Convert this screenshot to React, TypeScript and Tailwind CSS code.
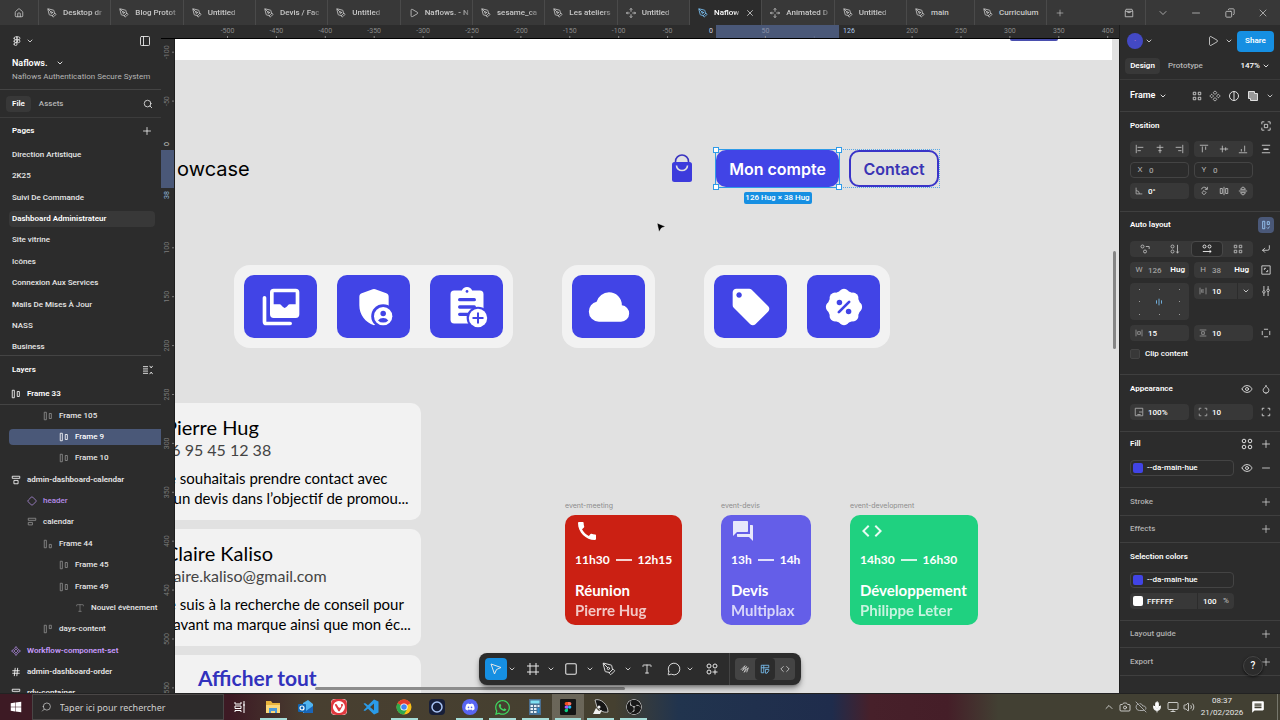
import type { ReactNode } from 'react';
import {
  ChevronDown, ChevronUp, Code, Component, Copy, CornerDownLeft, Diamond, Droplet, Eye, Figma, Hash, House, MessageCircle,
  Mic, Minus, Monitor, PanelLeft, PenTool, Play, Plus, Search, Square, Type, Volume2, X, CloudOff, Camera,
} from 'lucide-react';
import { MdCall, MdCode, MdForum, MdLocalOffer, MdMessage } from 'react-icons/md';
import { FaDiscord, FaWhatsapp, FaWindows } from 'react-icons/fa';
import { SiObsstudio, SiVivaldi } from 'react-icons/si';

/* ---------- small glyphs, drawn on a 12 x 12 grid ---------- */

function Glyph({ d, dots, className = 'size-3' }: { d?: string; dots?: [number, number, number][]; className?: string }) {
  return (
    <svg viewBox="0 0 12 12" className={`shrink-0 ${className}`} fill="none" stroke="currentColor" strokeWidth="1" aria-hidden="true">
      {d && <path d={d} />}
      {dots?.map(([x, y, r]) => <circle key={`${x}-${y}`} cx={x} cy={y} r={r} />)}
    </svg>
  );
}

const G = {
  frameRow: 'M1.500 1.500H4v9H1.500zM7.500 3H10v6H7.500z',
  frameRowEnd: 'M1.500 1.500H4v9H1.500zM7.500 6.500H10v4H7.500z',
  frameRowStart: 'M1.500 1.500H4v9H1.500zM7.500 1.500H10v4H7.500z',
  layoutAdd: 'M2 1.500h2.500v9H2zM7.500 2H10v3.500H7.500zM7 9l1.200 1.200L10.500 8',
  frameCol: 'M1.5 1.5h9v2.5h-9zM3.5 6.5h5v4h-5z',
  frameColLeft: 'M1.5 1.5h9v2.5h-9zM1.5 6.5h5v3h-5z',
  collapse: 'M0 2h6M0 4.700h6M0 7.300h6M0 10h6M8 1l1.800 2.500L11.600 1M8 11l1.800-2.500L11.600 11',
  alignL: 'M1.500 1v10M3 4h7M3 8h4',
  alignCH: 'M6 1v10M2 4h8M4 8h4',
  alignR: 'M10.500 1v10M9 4H2M9 8H5',
  alignT: 'M1 1.500h10M4 3v7M8 3v4',
  alignCV: 'M1 6h10M4 2v8M8 4v4',
  alignB: 'M1 10.500h10M4 9V6M8 9V2',
  distribute: 'M1 1.500h10M1 10.500h10M3 6h6M3 6.600h6',
  angle: 'M2.500 2v7.500H10M2.500 5.500a4 4 0 0 1 4 4',
  flipH: 'M6 1v10M4 3v6L1.500 9V3zM8 3v6l2.500 0V3z',
  flipV: 'M1 6h10M3 4h6L7 1.500H5zM3 8h6L7 10.500H5z',
  hgap: 'M1.500 1v10M10.500 1v10M6 3v6M4 3.500v5',
  vpad: 'M1 1.500h10M1 10.500h10M4 4h4v4H4z',
  hpad: 'M1.500 1v10M10.500 1v10M4 4h4v4H4z',
  corners: 'M1.500 4V1.500H4M8 1.500h2.500V4M10.500 8v2.500H8M4 10.500H1.500V8',
  sliders: 'M3.500 0v5M3.500 8.500V12M8.500 0v3.500M8.500 7v5M2 7a1.500 1.500 0 1 0 3 0a1.500 1.500 0 1 0-3 0M7 5.200a1.500 1.500 0 1 0 3 0a1.500 1.500 0 1 0-3 0',
  four: 'M1.500 1.500h3v3h-3zM7.500 1.500h3v3h-3zM1.500 7.500h3v3h-3zM7.500 7.500h3v3h-3z',
  target: 'M1 4V1h3M8 1h3v3M11 8v3H8M4 11H1V8M4 4h4v4H4z',
  fit: 'M1 1h10v10H1zM4 6V4h2M8 6v2H6',
  sides: 'M3.500 1.500h5M3.500 10.500h5M1.500 3.500v5M10.500 3.500v5',
  frame: 'M3 0v12M9 0v12M0 3h12M0 9h12',
  rotate: 'M6 5.500 8.500 8 6 10.500 3.500 8zM3 4a3.200 3.200 0 0 1 5.500-1.500L9.500 4M10 1v3H7',
};

function Chev() {
  return <ChevronDown className="size-2 shrink-0" strokeWidth={2.5} aria-hidden="true" />;
}

function FourDots({ last = false }: { last?: boolean }) {
  return (
    <Glyph
      className="size-3"
      dots={last ? [[3, 3, 2], [9, 3, 2], [3, 9, 2]] : [[3, 3, 1.8], [9, 3, 1.8], [3, 9, 1.8], [9, 9, 1.8]]}
      d={last ? 'M9 6.500v5M6.500 9h5' : undefined}
    />
  );
}

/* ---------- top tab strip ---------- */

type Tab = { title: string; kind: 'pen' | 'play' | 'make'; active?: boolean };
const TABS: Tab[] = [
  { title: 'Desktop dr', kind: 'pen' },
  { title: 'Blog Protot', kind: 'pen' },
  { title: 'Untitled', kind: 'pen' },
  { title: 'Devis / Fac', kind: 'pen' },
  { title: 'Untitled', kind: 'pen' },
  { title: 'Naflows. - N', kind: 'play' },
  { title: 'sesame_ca', kind: 'pen' },
  { title: 'Les ateliers', kind: 'pen' },
  { title: 'Untitled', kind: 'make' },
  { title: 'Naflow', kind: 'pen', active: true },
  { title: 'Animated D', kind: 'make' },
  { title: 'Untitled', kind: 'pen' },
];

function TabIcon({ kind }: { kind: Tab['kind'] }) {
  if (kind === 'play') return <Play className="size-2.5 shrink-0" strokeWidth={2} />;
  if (kind === 'make')
    return <Glyph className="size-2.5" d="M6 0.500v4M6 7.500v4M0.500 6h4M7.500 6h4M4.500 2 6 .5 7.500 2M4.500 10 6 11.500 7.500 10M2 4.500.5 6 2 7.500M10 4.500 11.500 6 10 7.500" />;
  return <PenTool className="size-2.5 shrink-0" strokeWidth={2} />;
}

function TabButton({ tab }: { tab: Tab }) {
  return (
    <button
      type="button"
      className={
        tab.active
          ? 'flex h-full min-w-0 items-center gap-1.5 border-r border-[#4a4a4a] bg-[#2c2c2c] pl-2 text-white'
          : 'flex h-full min-w-0 items-center gap-1.5 border-r border-[#4a4a4a] pl-2 text-[#c8c8c8]'
      }
    >
      <span className={tab.active ? 'text-[#7cc4f8]' : ''}><TabIcon kind={tab.kind} /></span>
      <span className="whitespace-nowrap [mask-image:linear-gradient(to_right,black_80%,#0006)]">{tab.title}</span>
      {tab.active && <X className="size-2.5 shrink-0" strokeWidth={1.5} />}
    </button>
  );
}

function TabStrip() {
  return (
    <header className="flex h-[25px] shrink-0 items-center bg-[#383838] font-medium text-[#c8c8c8]">
      <button type="button" aria-label="Home" className="flex h-full w-[39px] shrink-0 items-center justify-center border-r border-[#4a4a4a]">
        <House className="size-2.5" />
      </button>
      <nav className="grid h-full min-w-0 flex-1 grid-cols-12">
        {TABS.map((t, i) => <TabButton key={i} tab={t} />)}
      </nav>
      <div className="flex h-full w-[373px] shrink-0 items-center">
        <button type="button" className="flex h-full w-[68px] items-center gap-1.5 border-r border-[#4a4a4a] pl-2">
          <TabIcon kind="pen" />main
        </button>
        <button type="button" className="flex h-full w-[72px] items-center gap-1.5 border-r border-[#4a4a4a] pl-2">
          <TabIcon kind="pen" />Curriculum
        </button>
        <button type="button" aria-label="New tab" className="flex w-[26px] justify-center"><Plus className="size-2.5" strokeWidth={1.5} /></button>
        <span className="flex-1" />
        <button type="button" aria-label="Community" className="flex h-full w-[34px] items-center justify-center border-r border-[#4a4a4a]">
          <Glyph className="size-2.5" d="M1.500 4h9v6.500h-9zM1.500 4l1-2.500h7l1 2.500M4.500 4v1.500h3V4" />
        </button>
        <button type="button" aria-label="More tabs" className="flex w-[33px] justify-center"><ChevronDown className="size-3" strokeWidth={1.5} /></button>
        <button type="button" aria-label="Minimize" className="flex w-[34px] justify-center"><Minus className="size-3" strokeWidth={1.5} /></button>
        <button type="button" aria-label="Restore" className="flex w-[33px] justify-center"><Copy className="size-2.5 -scale-x-100" /></button>
        <button type="button" aria-label="Close" className="flex w-[34px] justify-center"><X className="size-3" strokeWidth={1.5} /></button>
      </div>
    </header>
  );
}

/* ---------- left panel ---------- */

const PAGES = ['Direction Artistique', '2K25', 'Suivi De Commande', 'Dashboard Administrateur', 'Site vitrine', 'Icônes', 'Connexion Aux Services', 'Mails De Mises À Jour', 'NASS', 'Business'];

type Layer = { name: string; pad: string; icon: ReactNode; tone?: string; bold?: boolean; selected?: boolean };
const dim = 'size-2.5 text-[#8f8f8f]';
const lit = 'size-2.5 text-white';
const LAYERS: Layer[] = [
  { name: 'Frame 105', pad: 'pl-[43px]', icon: <Glyph d={G.frameRow} className={dim} /> },
  { name: 'Frame 9', pad: 'pl-[50px]', icon: <Glyph d={G.frameRow} className={lit} />, selected: true },
  { name: 'Frame 10', pad: 'pl-[59px]', icon: <Glyph d={G.frameRow} className={dim} /> },
  { name: 'admin-dashboard-calendar', pad: 'pl-[11px]', icon: <Glyph d={G.frameCol} className={lit} />, bold: true },
  { name: 'header', pad: 'pl-[27px]', icon: <Diamond className="size-2.5 text-[#a787d4]" />, tone: 'text-[#b48be8]' },
  { name: 'calendar', pad: 'pl-[27px]', icon: <Glyph d={G.frameColLeft} className={dim} /> },
  { name: 'Frame 44', pad: 'pl-[43px]', icon: <Glyph d={G.frameRowEnd} className={dim} /> },
  { name: 'Frame 45', pad: 'pl-[59px]', icon: <Glyph d={G.frameRow} className={dim} /> },
  { name: 'Frame 49', pad: 'pl-[59px]', icon: <Glyph d={G.frameRow} className={dim} /> },
  { name: 'Nouvel évènement', pad: 'pl-[75px]', icon: <Type className={dim} strokeWidth={1.5} /> },
  { name: 'days-content', pad: 'pl-[43px]', icon: <Glyph d={G.frameRowStart} className={dim} /> },
  { name: 'Workflow-component-set', pad: 'pl-[11px]', icon: <Component className="size-2.5 text-[#c79bff]" />, tone: 'text-[#c79bff]', bold: true },
  { name: 'admin-dashboard-order', pad: 'pl-[11px]', icon: <Hash className={lit} />, bold: true },
  { name: 'rdv-container', pad: 'pl-[11px]', icon: <Glyph d={G.frameCol} className={lit} />, bold: true },
];

function LeftPanel() {
  return (
    <aside className="flex w-[161px] shrink-0 flex-col overflow-hidden bg-[#2c2c2c] text-[#e6e6e6]">
      <div className="flex h-[65px] shrink-0 flex-col border-b border-[#444] pt-2.5 pr-2.5 pl-3">
        <div className="flex h-3 items-center justify-between">
          <button type="button" aria-label="Main menu" className="flex items-center gap-1"><Figma className="size-2.5" /><Chev /></button>
          <button type="button" aria-label="Toggle panel"><PanelLeft className="size-3" strokeWidth={1.8} /></button>
        </div>
        <button type="button" className="mt-2.5 flex h-3 items-center gap-2 text-[9px] font-semibold text-white">Naflows.<Chev /></button>
        <p className="mt-0.5 flex h-3 items-center whitespace-nowrap text-[#b5b5b5]">Naflows Authentication Secure System</p>
      </div>
      <div className="flex h-7 shrink-0 items-center border-b border-[#3c3c3c] pr-2 pl-1.5 font-medium">
        <button type="button" className="flex h-4 items-center rounded bg-[#383838] px-1.5 font-semibold text-white">File</button>
        <button type="button" className="ml-2 text-[#b5b5b5]">Assets</button>
        <button type="button" aria-label="Search" className="ml-auto"><Search className="size-2.5" /></button>
      </div>
      <div className="flex h-[26px] shrink-0 items-center justify-between pr-2 pl-3 font-semibold text-white">
        <h2>Pages</h2>
        <button type="button" aria-label="Add page"><Plus className="size-3" strokeWidth={1.5} /></button>
      </div>
      <div className="h-[212px] shrink-0 overflow-hidden border-b border-[#444]">
        <ul className="flex h-[214px] flex-col">
          {PAGES.map((p) => (
            <li key={p} className="flex min-h-0 flex-1 items-center pr-1.5 pl-[9px]">
              <button
                type="button"
                className={p === 'Dashboard Administrateur'
                  ? 'flex h-4 w-full items-center rounded bg-[#383838] pl-[3px] font-semibold text-white'
                  : 'flex h-4 w-full items-center pl-[3px] font-medium'}
              >
                {p}
              </button>
            </li>
          ))}
        </ul>
      </div>
      <div className="flex h-[27px] shrink-0 items-center justify-between pr-2 pl-3 font-semibold text-white">
        <h2>Layers</h2>
        <button type="button" aria-label="Collapse layers"><Glyph d={G.collapse} className="size-2.5" /></button>
      </div>
      <div className="flex h-[22px] shrink-0 items-center gap-1.5 border-b border-[#444] pl-[11px] font-semibold text-white">
        <Glyph d={G.frameRow} className={lit} />Frame 33
      </div>
      <div className="min-h-0 flex-1 overflow-hidden">
        <ul className="flex h-[299px] flex-col font-medium">
          {LAYERS.map((l) => (
            <li key={l.name} className="flex min-h-0 flex-1 items-center">
              <button
                type="button"
                className={l.selected ? 'ml-[9px] flex h-4 w-full items-center rounded-l bg-[#4a5878] text-white' : 'flex h-4 w-full items-center'}
              >
                <span className={`flex items-center gap-1.5 whitespace-nowrap ${l.pad} ${l.tone ?? ''} ${l.bold ? 'font-semibold' : ''}`}>
                  {l.icon}{l.name}
                </span>
              </button>
            </li>
          ))}
        </ul>
      </div>
    </aside>
  );
}

/* ---------- rulers ---------- */

const STEP = 48.9;
const H_MARKS = [-500, -450, -400, -350, -300, -250, -200, -150, -100, -50, 50, 100, 200, 250, 300, 350, 400];
const V_MARKS = [-100, -50, 100, 150, 200, 250, 300, 350, 400, 450, 500, 550];

function TopRuler() {
  const x = (v: number) => 555.5 + (v / 50) * STEP;
  return (
    <svg className="block h-3.5 w-full shrink-0 border-b border-black bg-[#2c2c2c]" aria-hidden="true">
      <rect x="555" y="0" width="123" height="14" fill="#4a5878" />
      {H_MARKS.map((v) => (
        <g key={v}>
          {v !== 100 && <text x={x(v)} y="8" textAnchor="middle" fontSize="7" fill={v === 50 ? '#8a93a8' : '#8a8a8a'}>{v}</text>}
          <path d={`M${x(v)} 11v3`} stroke={v === 100 ? '#5c6986' : '#8a8a8a'} />
        </g>
      ))}
      <text x="550" y="8" textAnchor="middle" fontSize="7" fill="#cfd6e4">0</text>
      <text x="688" y="8" textAnchor="middle" fontSize="7" fill="#a9c6e8">126</text>
    </svg>
  );
}

function SideRuler() {
  const y = (v: number) => 111 + (v / 50) * STEP;
  return (
    <svg className="block h-full w-3.5 shrink-0 border-r border-[#1e1e1e] bg-[#2c2c2c]" aria-hidden="true">
      <rect x="0" y="111" width="14" height="38" fill="#4a5878" />
      {V_MARKS.map((v) => (
        <g key={v}>
          <text transform={`translate(8 ${y(v)}) rotate(-90)`} textAnchor="middle" fontSize="7" fill="#7c7c7c">{v}</text>
          <path d={`M11 ${y(v)}h3`} stroke="#7c7c7c" />
        </g>
      ))}
      <text transform="translate(8 105) rotate(-90)" textAnchor="middle" fontSize="7" fill="#d0d0d0">0</text>
      <text transform="translate(8 156) rotate(-90)" textAnchor="middle" fontSize="7" fill="#8fb4d8">38</text>
    </svg>
  );
}

/* ---------- canvas icons, 24 x 24 ---------- */

function InboxStack() {
  return (
    <svg viewBox="0 0 24 24" className="size-11" aria-hidden="true">
      <path fill="white" fillRule="evenodd" d="M8 2h12a2 2 0 0 1 2 2v12a2 2 0 0 1-2 2H8a2 2 0 0 1-2-2V4a2 2 0 0 1 2-2zM8 4v6.500h3.300c.6 0 .8.400 1.100.8.400.500.9.900 1.600 1.200.7-.3 1.200-.7 1.600-1.200.3-.4.500-.8 1.100-.8H20V4z" />
      <path fill="none" stroke="white" strokeWidth="2" strokeLinecap="round" strokeLinejoin="round" d="M3 7v13q0 1 1 1h13" />
    </svg>
  );
}

function ShieldPerson() {
  return (
    <svg viewBox="0 0 24 24" className="size-11" aria-hidden="true">
      <mask id="shield-cut"><rect width="24" height="24" fill="white" /><circle cx="17" cy="17" r="6.500" fill="black" /></mask>
      <path mask="url(#shield-cut)" fill="white" d="M11.300 2.250q.7-.25 1.400 0l6 2.250q.6.2.95.700.35.500.35 1.150V11.100c0 5-3.300 9.500-8 10.900-4.700-1.400-8-5.900-8-10.900V6.350q0-.65.350-1.150.35-.5.950-.7z" />
      <circle cx="17" cy="17" r="5" fill="white" />
      <circle cx="17" cy="15.500" r="1.500" fill="#4144e6" />
      <path d="M17 18q-1.800 0-2.800 1.300Q15.300 20.500 17 20.500t2.800-1.200Q18.800 18 17 18z" fill="#4144e6" />
    </svg>
  );
}

function ClipboardPlus() {
  return (
    <svg viewBox="0 0 24 24" className="size-11" aria-hidden="true">
      <mask id="clip-cut"><rect width="24" height="24" fill="white" /><circle cx="18" cy="18" r="6.200" fill="black" /></mask>
      <g mask="url(#clip-cut)">
        <path fill="white" d="M5 3h4.200a3 3 0 0 1 5.600 0H19a2 2 0 0 1 2 2v14a2 2 0 0 1-2 2H5a2 2 0 0 1-2-2V5a2 2 0 0 1 2-2z" />
        <circle cx="12" cy="3.500" r=".75" fill="#4144e6" />
        <path d="M8 8h8M8 12h8M8 16h5" stroke="#4144e6" strokeWidth="1.800" strokeLinecap="round" />
      </g>
      <circle cx="18" cy="18" r="5" fill="white" />
      <path d="M18 15v6M15 18h6" stroke="#4144e6" strokeWidth="1.100" />
    </svg>
  );
}

function Cloud() {
  return (
    <svg viewBox="0 0 24 24" className="size-11" fill="white" aria-hidden="true">
      <path d="M6.500 20q-2.280 0-3.890-1.570Q1 16.850 1 14.580q0-1.950 1.170-3.480 1.180-1.530 3.080-1.950.63-2.300 2.500-3.730Q9.630 4 12 4q2.930 0 4.960 2.040Q19 8.070 19 11q1.730.2 2.860 1.500 1.140 1.280 1.140 3 0 1.870-1.310 3.190T18.500 20z" />
    </svg>
  );
}

function PercentSeal() {
  const lobes = Array.from({ length: 8 }, (_, i) => (i * Math.PI) / 4);
  return (
    <svg viewBox="0 0 24 24" className="size-11" aria-hidden="true">
      <g fill="white">
        <circle cx="12" cy="12" r="8.900" />
        {lobes.map((a) => <circle key={a} cx={12 + 6.9 * Math.cos(a)} cy={12 + 6.9 * Math.sin(a)} r="3" />)}
      </g>
      <circle cx="9.500" cy="9.500" r="1.500" fill="#4144e6" />
      <circle cx="14.500" cy="14.500" r="1.500" fill="#4144e6" />
      <path d="M9.200 14.800 14.800 9.200" stroke="#4144e6" strokeWidth="1.500" strokeLinecap="round" />
    </svg>
  );
}

function Tile({ label, children }: { label: string; children: ReactNode }) {
  return (
    <button type="button" aria-label={label} className="flex h-[63px] w-[73px] items-center justify-center rounded-[10px] bg-[#4144e6] text-white">
      {children}
    </button>
  );
}

/* ---------- canvas nodes ---------- */

function MessageCard({ name, contact, lines }: { name: string; contact: string; lines: string[] }) {
  return (
    <article className="rounded-[10px] bg-[#f2f2f2] py-3 pl-[27px] whitespace-nowrap text-black">
      <h3 className="pl-[3px] text-[20px] leading-[25px]">{name}</h3>
      <p className="text-[16px] leading-5 text-[#444]">{contact}</p>
      <p className="mt-2 text-[15px] leading-5">{lines[0]}<br />{lines[1]}</p>
    </article>
  );
}

function EventCard({ label, icon, from, to, title, who, tone }: { label: string; icon: ReactNode; from: string; to: string; title: string; who: string; tone: string }) {
  return (
    <section>
      <p className="h-4 font-[Inter] text-[7px] leading-[14px] text-[#8d8d8d]">{label}</p>
      <div className={`flex h-[110px] flex-col rounded-[10px] px-2.5 pt-1 text-white ${tone}`}>
        <span className="[&>svg]:size-6">{icon}</span>
        <p className="mt-[9px] flex h-4 items-center gap-1.5 font-[Lato] text-[12px] font-bold whitespace-nowrap">
          {from}<span className="h-0.5 w-4 shrink-0 bg-current opacity-80" />{to}
        </p>
        <p className="mt-3 font-[Lato] text-[15px] leading-5 font-bold whitespace-nowrap">{title}</p>
        <p className="font-[Lato] text-[15px] leading-5 font-bold whitespace-nowrap opacity-75">{who}</p>
      </div>
    </section>
  );
}

function Handle({ place }: { place: string }) {
  return <span className={`absolute size-1.5 border border-[#2f9be8] bg-white ${place}`} />;
}

function Canvas() {
  return (
    <div className="relative min-w-0 flex-1 overflow-hidden bg-[#e1e1e1]">
      <div className="absolute top-0 right-[7px] left-0 h-[21px] bg-white" />
      <div className="absolute top-0 left-[835px] h-0.5 w-[48px] rounded-b bg-[#4a4fae]" />

      <p className="absolute top-[118px] left-0.5 font-[Inter] text-[20px] leading-6 text-black">owcase</p>

      <svg viewBox="0 0 22 30" className="absolute top-[114px] left-[496px] h-[30px] w-[22px]" fill="none" aria-hidden="true">
        <path d="M4.500 9V8.500a6.500 6.500 0 0 1 13 0V9" stroke="#3a34c0" strokeWidth="1.600" />
        <rect x="1" y="9" width="20" height="20" rx="2.500" fill="#3d3bdc" />
        <path d="M5.500 12.500a5.500 5 0 0 0 11 0" stroke="#e1e1e1" strokeWidth="1.600" />
      </svg>

      <div className="absolute top-[111px] left-[541px] flex gap-2.5 outline-1 outline-[#5aa9e6] outline-dotted">
        <div className="relative">
          <button type="button" className="h-[37px] w-[123px] rounded-[10px] bg-[#4144e6] font-[Inter] text-[16px] font-semibold text-white">Mon compte</button>
          <span className="absolute inset-0 outline-1 outline-[#2f9be8]" />
          <Handle place="-top-[3px] -left-[3px]" />
          <Handle place="-top-[3px] -right-[3px]" />
          <Handle place="-bottom-[3px] -left-[3px]" />
          <Handle place="-right-[3px] -bottom-[3px]" />
          <span className="absolute top-[42px] left-1/2 flex h-3 w-[68px] -translate-x-1/2 items-center justify-center rounded-[2px] bg-[#168fe2] font-medium whitespace-nowrap text-white">126 Hug × 38 Hug</span>
        </div>
        <button type="button" className="h-[37px] w-[90px] rounded-[10px] border-2 border-[#3a34c8] font-[Inter] text-[16px] font-semibold text-[#3a34b4]">Contact</button>
      </div>

      <div className="absolute top-[226px] left-[59px] flex items-center gap-[49px]">
        <div className="flex gap-5 rounded-2xl bg-[#f2f2f2] p-2.5">
          <Tile label="Inbox"><InboxStack /></Tile>
          <Tile label="Accounts"><ShieldPerson /></Tile>
          <Tile label="New task"><ClipboardPlus /></Tile>
        </div>
        <div className="flex gap-5 rounded-2xl bg-[#f2f2f2] p-2.5">
          <Tile label="Cloud"><Cloud /></Tile>
        </div>
        <div className="flex gap-5 rounded-2xl bg-[#f2f2f2] p-2.5">
          <Tile label="Tags"><MdLocalOffer className="size-11" /></Tile>
          <Tile label="Discounts"><PercentSeal /></Tile>
        </div>
      </div>

      <div className="absolute top-[364px] -left-10 flex w-[286px] flex-col gap-[9px] font-[Lato]">
        <MessageCard name="Pierre Hug" contact="06 95 45 12 38" lines={['Je souhaitais prendre contact avec', 'd’un devis dans l’objectif de promou...']} />
        <MessageCard name="Claire Kaliso" contact="claire.kaliso@gmail.com" lines={['Je suis à la recherche de conseil pour', 'd’avant ma marque ainsi que mon éc...']} />
        <div className="h-16 rounded-[10px] bg-[#f2f2f2] pt-[9px] pl-[63px]">
          <a href="#all" className="text-[21px] leading-7 font-bold text-[#3232bd]">Afficher tout</a>
        </div>
      </div>

      <div className="absolute top-[460px] left-[390px] w-[117px]">
        <EventCard label="event-meeting" icon={<MdCall />} from="11h30" to="12h15" title="Réunion" who="Pierre Hug" tone="bg-[#cb2013]" />
      </div>
      <div className="absolute top-[460px] left-[546px] w-[90px]">
        <EventCard label="event-devis" icon={<MdForum className="opacity-85" />} from="13h" to="14h" title="Devis" who="Multiplax" tone="bg-[#645ee8]" />
      </div>
      <div className="absolute top-[460px] left-[675px] w-[128px]">
        <EventCard label="event-development" icon={<MdCode className="opacity-90" />} from="14h30" to="16h30" title="Développement" who="Philippe Leter" tone="bg-[#1fd180]" />
      </div>

      <svg viewBox="0 0 10 10" className="absolute top-[184px] left-[481px] size-2.5" aria-hidden="true">
        <path d="M1 0 9.500 3.500 5.500 5 3 9z" fill="black" stroke="white" strokeWidth=".5" />
      </svg>

      <div className="absolute top-[212px] right-[3px] h-[98px] w-[3px] rounded bg-[#858585]" />
      <div className="absolute bottom-[3px] left-[140px] h-[3px] w-[310px] rounded bg-[#8c8c8c]" />
    </div>
  );
}

/* ---------- floating toolbar ---------- */

function Toolbar() {
  const cell = 'flex h-[22px] shrink-0 items-center justify-center';
  return (
    <div role="toolbar" className="absolute bottom-2 left-1/2 flex h-8 w-[322px] -translate-x-1/2 items-center rounded-lg bg-[#2c2c2c] pl-1.5 text-[#e8e8e8] shadow-md shadow-black/40">
      <button type="button" aria-label="Move" className={`${cell} w-[22px] rounded bg-[#168fe2]`}>
        <Glyph d="M1 1 11 4.500 6.500 6.500 4.500 11z" />
      </button>
      <span className={`${cell} w-[10px]`}><Chev /></span>
      <button type="button" aria-label="Frame" className={`${cell} w-[32px]`}><Glyph d={G.frame} /></button>
      <span className={`${cell} w-[4px]`}><Chev /></span>
      <button type="button" aria-label="Rectangle" className={`${cell} w-[36px]`}><Square className="size-3.5" strokeWidth={1.8} /></button>
      <span className={`${cell} w-[2px]`}><Chev /></span>
      <button type="button" aria-label="Pen" className={`${cell} w-[36px]`}><PenTool className="size-3.5" strokeWidth={1.6} /></button>
      <span className={`${cell} w-[2px]`}><Chev /></span>
      <button type="button" aria-label="Text" className={`${cell} w-[36px]`}><Type className="size-3" strokeWidth={1.8} /></button>
      <button type="button" aria-label="Comment" className={`${cell} w-[18px]`}><MessageCircle className="size-3.5" strokeWidth={1.6} /></button>
      <span className={`${cell} w-[14px]`}><Chev /></span>
      <button type="button" aria-label="Actions" className={`${cell} w-[30px]`}><FourDots last /></button>
      <span className="ml-0.5 h-full border-l border-[#444]" />
      <div className="ml-[5px] flex rounded bg-[#444] text-[#cfcfcf]">
        <button type="button" aria-label="Draw" className={`${cell} w-5`}><Glyph d="M1 7 6 2 3 8 8 3 5 10 10 4.500 8 10" className="size-2.5" /></button>
        <button type="button" aria-label="Design" className={`${cell} w-5 rounded bg-[#2c2c2c] text-[#7cc4f8]`}>
          <Glyph d="M1.500 1.500h9M1.500 1.500v9M1.500 4.500h9V1.500M4.500 1.500v9h-3M6.500 6.500h4v1.500l-2 3h-2z" className="size-2.5" />
        </button>
        <button type="button" aria-label="Dev Mode" className={`${cell} w-5`}><Code className="size-2.5" /></button>
      </div>
    </div>
  );
}

/* ---------- right panel ---------- */

function Section({ children, className = '' }: { children: ReactNode; className?: string }) {
  return <section className={`shrink-0 border-b border-[#3f3f3f] pr-1.5 pl-2.5 ${className}`}>{children}</section>;
}

function Head({ title, muted, children, className = 'h-[27px]' }: { title: string; muted?: boolean; children?: ReactNode; className?: string }) {
  return (
    <div className={`flex items-center gap-[5px] ${className}`}>
      <h2 className={muted ? 'flex-1 font-medium whitespace-nowrap text-[#b0b0b0]' : 'flex-1 font-semibold whitespace-nowrap text-white'}>{title}</h2>
      {children}
    </div>
  );
}

function Row({ children, className = '' }: { children: ReactNode; className?: string }) {
  return <div className={`grid grid-cols-[1fr_1fr_16px] items-center gap-x-[5px] ${className}`}>{children}</div>;
}

function IconButton({ label, children, className = '' }: { label: string; children: ReactNode; className?: string }) {
  return <button type="button" aria-label={label} className={`flex size-4 items-center justify-center ${className}`}>{children}</button>;
}

function Segment({ items, active }: { items: { label: string; icon: ReactNode }[]; active?: number }) {
  return (
    <div className="flex h-4 overflow-hidden rounded bg-[#383838] text-[#c4c4c4]">
      {items.map((it, i) => (
        <button
          key={it.label}
          type="button"
          aria-label={it.label}
          className={i === active ? 'flex flex-1 items-center justify-center rounded border border-[#484848] bg-[#2a2a2a] text-white' : 'flex flex-1 items-center justify-center'}
        >
          {it.icon}
        </button>
      ))}
    </div>
  );
}

function Field({ label, prefix, value, suffix, outlined, muted }: { label: string; prefix: ReactNode; value: string; suffix?: ReactNode; outlined?: boolean; muted?: boolean }) {
  return (
    <label className={`flex h-4 min-w-0 items-center gap-1 rounded px-1 ${outlined ? 'border border-[#444]' : 'bg-[#383838]'}`}>
      <span className="flex min-w-2.5 shrink-0 justify-center text-[#b0b0b0]">{prefix}</span>
      <input aria-label={label} defaultValue={value} className={`w-0 min-w-0 flex-1 bg-transparent font-medium outline-none ${muted ? 'text-[#a0a0a0]' : 'text-white'}`} />
      {suffix}
    </label>
  );
}

const s = 'size-2.5';

function ColorField({ label }: { label: string }) {
  return (
    <button type="button" className="flex h-4 w-[104px] items-center gap-1 rounded border border-[#444] px-0.5 font-medium text-white">
      <span className="size-2.5 rounded-[2px] bg-[#4144e6]" />{label}
    </button>
  );
}

function RightPanel() {
  return (
    <aside className="relative flex w-[161px] shrink-0 flex-col overflow-hidden border-l border-[#1e1e1e] bg-[#2c2c2c] text-[#e0e0e0]">
      <div className="flex h-8 shrink-0 items-center pr-1.5 pl-[7px]">
        <span className="flex size-4 items-center justify-center rounded-full bg-[#4349c4] text-[#d08ad0]">·</span>
        <span className="ml-0.5"><Chev /></span>
        <button type="button" aria-label="Present" className="ml-auto"><Play className="size-3" strokeWidth={1.6} /></button>
        <span className="mr-1 ml-1.5"><Chev /></span>
        <button type="button" className="h-[21px] w-[37px] rounded bg-[#168fe2] font-semibold text-white">Share</button>
      </div>
      <div className="flex h-[23px] shrink-0 items-center border-b border-[#3a3a3a] pr-2.5 pb-1 pl-[5px] font-medium">
        <button type="button" className="h-4 w-[35px] rounded bg-[#383838] font-semibold text-white">Design</button>
        <button type="button" className="ml-2 text-[#b5b5b5]">Prototype</button>
        <button type="button" className="ml-auto flex items-center gap-0.5 text-white">147%<Chev /></button>
      </div>

      <Section className="flex h-8 items-center">
        <button type="button" className="flex items-center gap-1 text-[9px] font-semibold text-white">Frame<Chev /></button>
        <div className="ml-auto flex items-center gap-[7px]">
          <Glyph d={G.four} className={s} />
          <Component className="size-3" strokeWidth={1.5} />
          <Glyph d="M6 1.500v9" dots={[[6, 6, 4.5]]} className="size-3" />
          <svg viewBox="0 0 12 12" className="size-3" aria-hidden="true"><path d="M1.500 1.500h6v2h3v7h-7v-2h-2z" fill="#9a9a9a" stroke="currentColor" /></svg>
          <Chev />
        </div>
      </Section>

      <Section className="h-[100px]">
        <Head title="Position" className="mb-0.5 h-[27px]"><IconButton label="Ignore auto layout"><Glyph d={G.target} className={s} /></IconButton></Head>
        <div className="flex flex-col gap-[5px]">
          <Row>
            <Segment items={[{ label: 'Align left', icon: <Glyph d={G.alignL} className={s} /> }, { label: 'Align center', icon: <Glyph d={G.alignCH} className={s} /> }, { label: 'Align right', icon: <Glyph d={G.alignR} className={s} /> }]} />
            <Segment items={[{ label: 'Align top', icon: <Glyph d={G.alignT} className={s} /> }, { label: 'Align middle', icon: <Glyph d={G.alignCV} className={s} /> }, { label: 'Align bottom', icon: <Glyph d={G.alignB} className={s} /> }]} />
            <IconButton label="Distribute"><Glyph d={G.distribute} className={s} /></IconButton>
          </Row>
          <Row>
            <Field label="X position" prefix="X" value="0" outlined muted />
            <Field label="Y position" prefix="Y" value="0" outlined muted />
          </Row>
          <Row>
            <Field label="Rotation" prefix={<Glyph d={G.angle} className={s} />} value="0°" />
            <Segment items={[{ label: 'Rotate', icon: <Glyph d={G.rotate} className={s} /> }, { label: 'Flip horizontal', icon: <Glyph d={G.flipH} className={s} /> }, { label: 'Flip vertical', icon: <Glyph d={G.flipV} className={s} /> }]} />
          </Row>
        </div>
      </Section>

      <Section className="h-[163px]">
        <Head title="Auto layout" className="mb-1 h-[25px]">
          <IconButton label="Remove auto layout" className="rounded bg-[#4a5878] text-[#9fd0ff]"><Glyph d={G.layoutAdd} className={s} /></IconButton>
        </Head>
        <div className="flex flex-col gap-[5px]">
          <div className="grid grid-cols-[1fr_16px] gap-x-[5px]">
            <Segment
              active={2}
              items={[
                { label: 'Free', icon: <Glyph d="M7 3h4v3" dots={[[3, 3, 1.8], [6, 9, 1.8]]} className={s} /> },
                { label: 'Vertical', icon: <Glyph d="M9 1v10M7.500 9 9 11l1.500-2" dots={[[3, 3, 1.8], [3, 9, 1.8]]} className={s} /> },
                { label: 'Horizontal', icon: <Glyph d="M1 9h10M9 7.500 11 9 9 10.500" dots={[[3, 3, 1.8], [9, 3, 1.8]]} className={s} /> },
                { label: 'Grid', icon: <Glyph d={G.four} className={s} /> },
              ]}
            />
            <IconButton label="Wrap"><CornerDownLeft className={s} /></IconButton>
          </div>
          <Row>
            <Field label="Width" prefix="W" value="126" muted suffix={<button type="button" className="font-semibold text-white">Hug</button>} />
            <Field label="Height" prefix="H" value="38" muted suffix={<button type="button" className="font-semibold text-white">Hug</button>} />
            <IconButton label="Constrain"><Glyph d={G.fit} className={s} /></IconButton>
          </Row>
          <Row className="items-start!">
            <div className="grid h-[37px] grid-cols-3 place-items-center rounded bg-[#383838] py-0.5">
              {Array.from({ length: 9 }, (_, i) =>
                i === 4
                  ? <Glyph key={i} d="M3 4v4M6 2v8M9 4v4" className="size-2.5 text-[#7cc4f8]" />
                  : <span key={i} className="size-px bg-[#9a9a9a]" />
              )}
            </div>
            <Field label="Gap" prefix={<Glyph d={G.hgap} className="size-2" />} value="10" suffix={<span className="-mr-1 flex h-full w-4 items-center justify-center border-l border-[#2c2c2c]"><Chev /></span>} />
            <IconButton label="Advanced layout"><Glyph d={G.sliders} className={s} /></IconButton>
          </Row>
          <Row>
            <Field label="Horizontal padding" prefix={<Glyph d={G.hpad} className="size-2" />} value="15" />
            <Field label="Vertical padding" prefix={<Glyph d={G.vpad} className="size-2" />} value="10" />
            <IconButton label="Individual padding"><Glyph d={G.sides} className={s} /></IconButton>
          </Row>
          <label className="flex h-4 items-center gap-[5px] font-medium text-white">
            <input type="checkbox" className="size-2.5 appearance-none rounded-[2px] border border-[#444] bg-[#383838]" />Clip content
          </label>
        </div>
      </Section>

      <Section className="h-[57px]">
        <Head title="Appearance" className="mb-0.5 h-[27px]">
          <Eye className="size-3" strokeWidth={1.8} /><IconButton label="Blend mode"><Droplet className={s} /></IconButton>
        </Head>
        <Row>
          <Field label="Opacity" prefix={<Glyph d="M1.500 1.500h9v9h-9zM4 9h4M6 6h4" className={s} />} value="100%" />
          <Field label="Corner radius" prefix={<Glyph d={G.corners} className={s} />} value="10" />
          <IconButton label="Individual corners"><Glyph d={G.corners} className={s} /></IconButton>
        </Row>
      </Section>

      <Section className="h-14">
        <Head title="Fill" className="mb-1 h-6">
          <FourDots /><IconButton label="Add fill"><Plus className="size-3" strokeWidth={1.6} /></IconButton>
        </Head>
        <div className="flex items-center">
          <ColorField label="--da-main-hue" />
          <Eye className="mr-[5px] ml-auto size-3" strokeWidth={1.8} />
          <IconButton label="Remove fill"><Minus className="size-3" strokeWidth={1.6} /></IconButton>
        </div>
      </Section>
      <Section><Head title="Stroke" muted><IconButton label="Add stroke"><Plus className="size-3" strokeWidth={1.4} /></IconButton></Head></Section>
      <Section><Head title="Effects" muted className="h-[26px]"><IconButton label="Add effect"><Plus className="size-3" strokeWidth={1.4} /></IconButton></Head></Section>
      <Section className="h-[78px]">
        <Head title="Selection colors" className="mb-0.5 h-[27px]" />
        <div className="flex flex-col gap-[5px]">
          <ColorField label="--da-main-hue" />
          <div className="flex h-4 w-[104px] items-center rounded bg-[#383838] px-0.5 font-medium text-white">
            <span className="ml-px size-2.5 shrink-0 rounded-[2px] bg-white" />
            <input aria-label="Hex" defaultValue="FFFFFF" className="ml-1 w-[50px] bg-transparent outline-none" />
            <input aria-label="Color opacity" defaultValue="100" className="h-full w-[26px] border-l border-[#2c2c2c] bg-transparent pl-[5px] outline-none" />
            <span className="text-[#b0b0b0]">%</span>
          </div>
        </div>
      </Section>
      <Section><Head title="Layout guide" muted className="h-[26px]"><IconButton label="Add layout guide"><Plus className="size-3" strokeWidth={1.4} /></IconButton></Head></Section>
      <Section><Head title="Export" muted><IconButton label="Add export"><Plus className="size-3" strokeWidth={1.4} /></IconButton></Head></Section>

      <button type="button" className="absolute right-[17px] bottom-[17px] size-5 rounded-full border border-[#454545] bg-[#2c2c2c] text-[10px] font-medium text-white shadow shadow-black/50">?</button>
    </aside>
  );
}

/* ---------- task bar ---------- */

const TASKS: { label: string; open?: boolean; current?: boolean; icon: ReactNode }[] = [
  { label: 'Task view', icon: <Glyph d="M1 1v2h6V1M1 5h6v2.500H1zM1 11V9.500h6V11M10 0v12M9 4h2" className="size-3 text-white" /> },
  { label: 'Files', open: true, icon: <svg viewBox="0 0 16 16" className="size-4"><path d="M1 2h5l1.500 2H15v10H1z" fill="#e8b33c" /><path d="M1 6h14v8H1z" fill="#fbd97a" /><path d="M4 9h8v5h-2v-2H6v2H4z" fill="#4d9bd8" /></svg> },
  { label: 'Outlook', icon: <svg viewBox="0 0 16 16" className="size-4"><path d="M5 4 10 1l5 4v9H5z" fill="#50b4f0" /><path d="M5 14 15 7v7z" fill="#1a66b8" /><rect x="0" y="5" width="8" height="8" rx="1" fill="#1267b4" /><circle cx="4" cy="9" r="2" fill="none" stroke="white" strokeWidth="1.200" /></svg> },
  { label: 'Vivaldi', icon: <SiVivaldi className="size-4 rounded bg-white text-[#e0393e]" /> },
  { label: 'VS Code', icon: <svg viewBox="0 0 16 16" className="size-4"><path d="M11 0.500 15.500 2.500v11L11 15.500 5 9.700 2 12 .5 11.200 3.800 8 .5 4.800 2 4l3 2.300zM11 4.500 7 8l4 3.500z" fill="#2a9be8" fillRule="evenodd" /></svg> },
  { label: 'Chrome', open: true, icon: <svg viewBox="0 0 16 16" className="size-4"><circle cx="8" cy="8" r="7.500" fill="#fbc116" /><path d="M8 8 1.500 4.250A7.500 7.500 0 0 1 14.500 4.250z" fill="#e33b2e" /><path d="M8 8 1.500 4.250A7.500 7.500 0 0 0 8 15.500l3-5z" fill="#2da94f" /><circle cx="8" cy="8" r="3.600" fill="white" /><circle cx="8" cy="8" r="2.800" fill="#4285f4" /></svg> },
  { label: 'Browser', icon: <svg viewBox="0 0 16 16" className="size-4"><rect width="16" height="16" rx="4" fill="#171e38" /><circle cx="8" cy="8" r="5" fill="none" stroke="#a9c4f5" strokeWidth="1.500" /></svg> },
  { label: 'Discord', open: true, icon: <span className="flex size-4 items-center justify-center rounded-full bg-[#5865f2] text-white"><FaDiscord className="size-2.5" /></span> },
  { label: 'WhatsApp', open: true, icon: <FaWhatsapp className="size-[17px] text-[#3fd65f]" /> },
  { label: 'Calculator', open: true, icon: <svg viewBox="0 0 16 16" className="size-4"><rect x="2" y="0" width="12" height="16" fill="#4a6f90" /><rect x="3.500" y="1.500" width="9" height="3" fill="#7fe0f2" /><path d="M3.500 6h2.500v2H3.500zM7 6h2.500v2H7zM3.500 9h2.500v2H3.500zM7 9h2.500v2H7zM3.500 12h2.500v2H3.500zM7 12h2.500v2H7zM10.500 6h2v2h-2z" fill="#e5eef5" /><path d="M10.500 9h2v5h-2z" fill="#2c8fd0" /></svg> },
  { label: 'Figma', open: true, current: true, icon: <svg viewBox="0 0 16 16" className="size-4"><rect width="16" height="16" rx="1" fill="#151515" /><path d="M8 3H6.300a1.700 1.700 0 0 0 0 3.400H8z" fill="#f24e1e" /><path d="M8 3h1.700a1.700 1.700 0 0 1 0 3.400H8z" fill="#ff7262" /><path d="M8 6.400H6.300a1.700 1.700 0 0 0 0 3.400H8z" fill="#a259ff" /><circle cx="9.700" cy="8.100" r="1.700" fill="#1abcfe" /><path d="M8 9.800H6.300A1.700 1.700 0 1 0 8 11.500z" fill="#0acf83" /></svg> },
  { label: 'Satellite', open: true, icon: <svg viewBox="0 0 16 16" className="size-4"><path d="M2 1c5-2 13 4 13 12-5 1-9-2-11-5z" fill="#151515" stroke="#ddd" strokeWidth=".8" /><path d="M0 15 3 9l3 3 3-1-2 4z" fill="#f0f0f0" /><circle cx="6" cy="8" r="1.500" fill="#f0f0f0" /></svg> },
  { label: 'OBS', open: true, icon: <SiObsstudio className="size-4 rounded-full bg-[#181818] text-[#d8d8d8]" /> },
];

function TaskBar() {
  return (
    <footer className="flex h-[27px] shrink-0 items-center border-t border-[#222] bg-[linear-gradient(to_right,#3d1a24_0%,#3d1a24_18%,#483f30_24%,#454030_48%,#21344e_53%,#1f2c4c_65%,#47202a_68%,#451e28_74%,#424033_78%,#424033_100%)] text-white">
      <button type="button" aria-label="Start" className="flex w-8 shrink-0 justify-center"><FaWindows className="size-3" /></button>
      <label className="flex h-full w-[192px] shrink-0 items-center gap-2 border border-[#4a4646] bg-[#2d2b2b] pl-2 text-[#cfcfcf]">
        <Search className="size-3 -scale-x-100" strokeWidth={1.6} />
        <input placeholder="Taper ici pour rechercher" aria-label="Taper ici pour rechercher" className="w-full bg-transparent font-[Noto_Sans] text-[9px] outline-none placeholder:text-[#cfcfcf]" />
      </label>
      <div className="grid h-full w-[426px] shrink-0 grid-cols-13">
        {TASKS.map((t) => (
          <button
            key={t.label}
            type="button"
            aria-label={t.label}
            className={t.current ? 'relative flex items-center justify-center bg-white/20' : 'relative flex items-center justify-center'}
          >
            {t.icon}
            {t.open && <span className="absolute inset-x-[3px] bottom-0 h-0.5 bg-[#a5dcd8]" />}
          </button>
        ))}
      </div>
      <div className="ml-auto flex h-full items-center text-[#e8e8e8]">
        <div className="flex items-center gap-1">
          <ChevronUp className="size-3" strokeWidth={1.6} />
          <Camera className="size-3" strokeWidth={1.6} />
          <CloudOff className="size-3 text-[#a8a8a8]" />
          <Mic className="size-3 fill-white" />
          <Monitor className="size-3" strokeWidth={1.6} />
          <Volume2 className="size-3" strokeWidth={1.6} />
        </div>
        <div className="ml-1 w-[46px] text-center text-[8px] leading-3 whitespace-nowrap">08:37<br />21/02/2026</div>
        <MdMessage className="mr-[12px] ml-1.5 size-3.5 text-white" />
      </div>
      <span className="h-full w-[3px] border-l border-[#77776c]" />
    </footer>
  );
}

export default function App() {
  return (
    <div className="flex h-screen min-h-0 w-full flex-col overflow-hidden bg-[#2c2c2c] font-[Roboto,sans-serif] text-[8px] leading-none select-none">
      <TabStrip />
      <main className="relative flex min-h-0 flex-1">
        <LeftPanel />
        <div className="flex min-w-0 flex-1 flex-col">
          <TopRuler />
          <div className="flex min-h-0 flex-1"><SideRuler /><Canvas /></div>
        </div>
        <RightPanel />
        <Toolbar />
      </main>
      <TaskBar />
    </div>
  );
}
